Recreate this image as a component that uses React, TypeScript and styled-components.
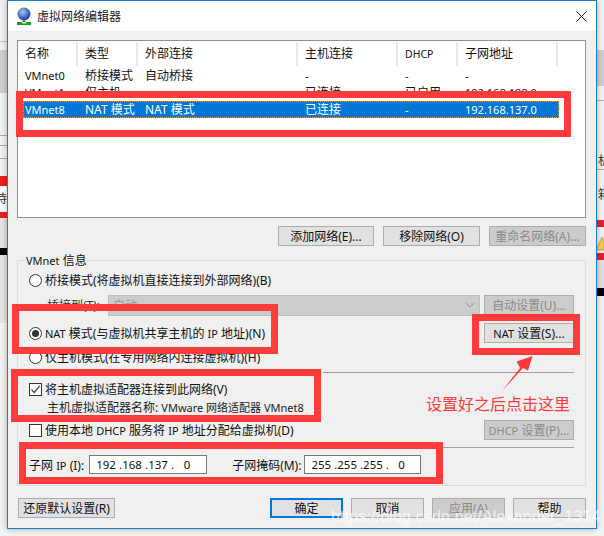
import styled, { createGlobalStyle } from 'styled-components';

const GlobalStyle = createGlobalStyle`
  html, body {
    margin: 0;
    padding: 0;
    background: #f4f4f4;
  }
  body {
    width: 604px;
    height: 536px;
    overflow: hidden;
    font-family: "Noto Sans", "Noto Sans CJK SC", sans-serif;
    font-size: 12px;
    color: #111;
  }
`;

const Desktop = styled.div`
  position: relative;
  width: 604px;
  height: 536px;
  overflow: hidden;
  background: #f3f3f3;
`;

// scraps of the windows behind the dialog
const Scrap = styled.div<{ $side: 'left' | 'right'; $top: number; $height: number; $color: string }>`
  position: absolute;
  ${(p) => (p.$side === 'left' ? 'left: 0; width: 8px;' : 'right: 0; width: 8px;')}
  top: ${(p) => p.$top}px;
  height: ${(p) => p.$height}px;
  background: ${(p) => p.$color};
`;

const ScrapText = styled.span<{ $side: 'left' | 'right'; $top: number }>`
  position: absolute;
  ${(p) => (p.$side === 'left' ? 'left: -5px;' : 'right: -6px;')}
  top: ${(p) => p.$top}px;
  font-size: 12px;
  line-height: 14px;
  color: #333;
`;

const WarnIcon = styled.svg`
  position: absolute;
  right: 0;
  top: 236px;
`;

const Window = styled.div`
  position: absolute;
  left: 7px;
  top: 0;
  width: 590px;
  height: 529px;
  box-sizing: border-box;
  border: 1px solid #1b7cd0;
  background: #f0f0f0;
  box-shadow: 0 0 6px rgba(0, 0, 0, 0.3);
  display: flex;
  flex-direction: column;
`;

const TitleBar = styled.div`
  height: 30px;
  flex: none;
  background: #fff;
  display: flex;
  align-items: center;
  padding: 0 9px 0 8px;
  gap: 5px;
  font-size: 12px;
`;

const Title = styled.span`
  flex: 1;
  color: #222;
`;

const Body = styled.div`
  flex: 1;
  padding: 9px 10px 0 9px;
  display: flex;
  flex-direction: column;
`;

const ListView = styled.div`
  height: 178px;
  flex: none;
  box-sizing: border-box;
  border: 1px solid #8e9096;
  background: #fff;
`;

const HeaderRow = styled.div`
  display: grid;
  grid-template-columns: 60px 60px 160px 100px 60px 100px;
  height: 24px;
  margin: 1px 0;
`;

const HeaderCell = styled.div<{ $latin?: boolean }>`
  padding-left: 7px;
  border-right: 2px solid #e8e8e8;
  line-height: 24px;
  color: #111;
  font-size: ${(p) => (p.$latin ? '10.5px' : '12px')};
`;

const Row = styled.div<{ $selected?: boolean }>`
  display: grid;
  grid-template-columns: 55px 60px 160px 100px 60px 100px;
  width: 536px;
  height: 17px;
  margin-left: 5px;
  line-height: 17px;
  box-sizing: border-box;
  color: ${(p) => (p.$selected ? '#fff' : '#111')};
  background: ${(p) => (p.$selected ? '#0078d7' : 'transparent')};
  outline: ${(p) => (p.$selected ? '1px dotted #f39a2b' : 'none')};
  outline-offset: -1px;
`;

const Cell = styled.div<{ $latin?: boolean }>`
  padding-left: 7px;
  white-space: nowrap;
  font-size: ${(p) => (p.$latin ? '11px' : '12px')};
  &:first-child {
    padding-left: 2px;
  }
`;

const ButtonRow = styled.div`
  display: flex;
  justify-content: flex-end;
  gap: 9px;
  margin-top: 8px;
`;

const Button = styled.div<{ $w: number; $disabled?: boolean; $primary?: boolean; $darker?: boolean }>`
  width: ${(p) => p.$w}px;
  height: 20px;
  flex: none;
  box-sizing: border-box;
  display: flex;
  align-items: center;
  justify-content: center;
  white-space: nowrap;
  background: ${(p) => (p.$darker ? '#cccccc' : '#e1e1e1')};
  border: ${(p) => (p.$primary ? '2px solid #0078d7' : '1px solid #adadad')};
  color: ${(p) => (p.$disabled ? '#8a8a8a' : '#111')};
  font-size: 12px;
`;

const Group = styled.div`
  position: relative;
  margin-top: 14px;
  height: 226px;
  flex: none;
  box-sizing: border-box;
  border: 1px solid #dcdcdc;
  padding: 10px 11px 0;
  display: flex;
  flex-direction: column;
`;

const Legend = styled.span`
  position: absolute;
  left: 7px;
  top: -8px;
  padding: 0 1px;
  background: #f0f0f0;
  line-height: 15px;
`;

const OptionRow = styled.div<{ $top: number; $indent?: number }>`
  display: flex;
  align-items: center;
  justify-content: space-between;
  height: 18px;
  margin-top: ${(p) => p.$top}px;
  padding-left: ${(p) => p.$indent ?? 0}px;
  white-space: nowrap;
`;

const OptionLabel = styled.label`
  display: flex;
  align-items: center;
  gap: 3px;
  color: #111;
`;

const Radio = styled.span<{ $checked?: boolean }>`
  width: 13px;
  height: 13px;
  box-sizing: border-box;
  border-radius: 50%;
  border: 1px solid #333;
  background: #fff;
  display: flex;
  align-items: center;
  justify-content: center;
  &::after {
    content: '';
    width: 7px;
    height: 7px;
    border-radius: 50%;
    background: ${(p) => (p.$checked ? '#333' : 'transparent')};
  }
`;

const Checkbox = styled.span`
  width: 13px;
  height: 13px;
  box-sizing: border-box;
  border: 1px solid #333;
  background: #fff;
  display: flex;
  align-items: center;
  justify-content: center;
`;

const Select = styled.div`
  position: relative;
  width: 372px;
  height: 21px;
  flex: none;
  box-sizing: border-box;
  background: #cccccc;
  border: 1px solid #bfbfbf;
  color: #999;
  padding-left: 4px;
  line-height: 19px;
  margin-left: 8px;
`;

const SelectArrow = styled.svg`
  position: absolute;
  right: 4px;
  top: 6px;
`;

const BridgeLabel = styled.span`
  color: #333;
`;

const Spread = styled.div`
  flex: 1;
`;

const SubnetGap = styled.div`
  flex: none;
  width: 25px;
`;

const SubLabel = styled.div`
  height: 18px;
  line-height: 18px;
  margin: 1px 0 0 18px;
  color: #222;
  white-space: nowrap;
`;

const Small = styled.span`
  font-size: 11px;
`;

const Divider = styled.div<{ $top: number; $left: number }>`
  position: absolute;
  top: ${(p) => p.$top}px;
  left: ${(p) => p.$left}px;
  right: 11px;
  height: 1px;
  background: #a0a0a0;
`;

const SubnetRow = styled.div`
  display: flex;
  align-items: center;
  margin-top: 16px;
  height: 19px;
  white-space: nowrap;
`;

const IpInput = styled.div<{ $w: number; $ml: number }>`
  width: ${(p) => p.$w}px;
  margin-left: ${(p) => p.$ml}px;
  height: 19px;
  box-sizing: border-box;
  border: 1px solid #7a7a7a;
  background: #fff;
  display: grid;
  grid-template-columns: repeat(4, 1fr);
  padding: 0 6px;
  line-height: 17px;
  font-size: 11.5px;
`;

const Octet = styled.span`
  text-align: center;
`;

const Footer = styled.div`
  display: flex;
  margin-top: 12px;
  gap: 8px;
  padding-left: 1px;
`;

const RedBox = styled.div<{ $x: number; $y: number; $w: number; $h: number }>`
  position: absolute;
  left: ${(p) => p.$x}px;
  top: ${(p) => p.$y}px;
  width: ${(p) => p.$w}px;
  height: ${(p) => p.$h}px;
  box-sizing: border-box;
  border: 7px solid #ff3b3b;
`;

const Note = styled.div`
  position: absolute;
  left: 426px;
  top: 394px;
  font-size: 16px;
  line-height: 20px;
  color: #ff3b3b;
  white-space: nowrap;
`;

const ArrowSvg = styled.svg`
  position: absolute;
  left: 495px;
  top: 350px;
`;

const Watermark = styled.div`
  position: absolute;
  left: 331px;
  top: 507px;
  font-family: "Liberation Sans", sans-serif;
  font-size: 16px;
  letter-spacing: 0.15px;
  line-height: 20px;
  color: rgba(255, 255, 255, 0.72);
  white-space: nowrap;
`;

const Check = () => (
  <svg width="11" height="11" viewBox="0 0 11 11">
    <path d="M1.5 5.5 L4.2 8.5 L9.8 1.8" fill="none" stroke="#444" strokeWidth="1.2" />
  </svg>
);

const NetIcon = () => (
  <svg width="16" height="18" viewBox="0 0 16 18">
    <defs>
      <radialGradient id="globe" cx="0.4" cy="0.35" r="0.7">
        <stop offset="0" stopColor="#a9c8f2" />
        <stop offset="0.6" stopColor="#3f6fc4" />
        <stop offset="1" stopColor="#1d3c8c" />
      </radialGradient>
    </defs>
    <circle cx="8" cy="7" r="6.5" fill="url(#globe)" />
    <rect x="6.5" y="13" width="3" height="2" fill="#777" />
    <rect x="1" y="15" width="14" height="3" fill="#19a319" />
    <rect x="6" y="15" width="4" height="1.5" fill="#e8e8e8" />
  </svg>
);

const CloseIcon = () => (
  <svg width="11" height="11" viewBox="0 0 11 11">
    <path d="M0.5 0.5 L10.5 10.5 M10.5 0.5 L0.5 10.5" stroke="#222" strokeWidth="1" />
  </svg>
);

const isLatin = (s: string) => /^[\x00-\x7f]+$/.test(s);

const columns = ['名称', '类型', '外部连接', '主机连接', 'DHCP', '子网地址'];
const rows = [
  ['VMnet0', '桥接模式', '自动桥接', '-', '-', '-'],
  ['VMnet1', '仅主机', '-', '已连接', '已启用', '192.168.188.0'],
  ['VMnet8', 'NAT 模式', 'NAT 模式', '已连接', '-', '192.168.137.0'],
];

export default function App() {
  return (
    <Desktop>
      <GlobalStyle />
      <Scrap $side="left" $top={41} $height={1} $color="#c4c4c4" />
      <Scrap $side="left" $top={50} $height={43} $color="#cfcfcf" />
      <Scrap $side="left" $top={135} $height={1} $color="#aaa" />
      <Scrap $side="left" $top={145} $height={1} $color="#aaa" />
      <Scrap $side="left" $top={158} $height={1} $color="#aaa" />
      <Scrap $side="left" $top={176} $height={10} $color="#ee1c25" />
      <Scrap $side="left" $top={186} $height={26} $color="#fff" />
      <ScrapText $side="left" $top={192}>持</ScrapText>
      <Scrap $side="left" $top={212} $height={6} $color="#ee1c25" />
      <Scrap $side="left" $top={218} $height={30} $color="#e4e4e4" />
      <Scrap $side="left" $top={248} $height={7} $color="#000" />
      <Scrap $side="left" $top={255} $height={68} $color="#e4e4e4" />
      <Scrap $side="right" $top={50} $height={36} $color="#cfcfcf" />
      <Scrap $side="right" $top={100} $height={1} $color="#aaa" />
      <ScrapText $side="right" $top={154}>机</ScrapText>
      <Scrap $side="right" $top={169} $height={1} $color="#aaa" />
      <ScrapText $side="right" $top={188}>箱</ScrapText>
      <Scrap $side="right" $top={220} $height={7} $color="#ee1c25" />
      <WarnIcon width="8" height="15" viewBox="0 0 8 15">
        <path d="M0 14 L6 1 L8 5 L8 14 Z" fill="#f4d03f" stroke="#8a7a20" strokeWidth="0.5" />
      </WarnIcon>
      <Scrap $side="right" $top={253} $height={7} $color="#ee1c25" />
      <Scrap $side="right" $top={260} $height={28} $color="#e0e0e0" />
      <Scrap $side="right" $top={288} $height={8} $color="#000" />
      <Window>
        <TitleBar>
          <NetIcon />
          <Title>虚拟网络编辑器</Title>
          <CloseIcon />
        </TitleBar>
        <Body>
          <ListView>
            <HeaderRow>
              {columns.map((c) => (
                <HeaderCell key={c} $latin={isLatin(c)}>{c}</HeaderCell>
              ))}
            </HeaderRow>
            {rows.map((r) => (
              <Row key={r[0]} $selected={r[0] === 'VMnet8'}>
                {r.map((c, i) => (
                  <Cell key={i} $latin={isLatin(c)}>{c}</Cell>
                ))}
              </Row>
            ))}
          </ListView>
          <ButtonRow>
            <Button $w={96}>添加网络(E)...</Button>
            <Button $w={97}>移除网络(O)</Button>
            <Button $w={97} $disabled $darker>重命名网络(A)...</Button>
          </ButtonRow>
          <Group>
            <Legend><Small>VMnet</Small> 信息</Legend>
            <OptionRow $top={0}>
              <OptionLabel><Radio />桥接模式(将虚拟机直接连接到外部网络)(B)</OptionLabel>
            </OptionRow>
            <OptionRow $top={7} $indent={18}>
              <BridgeLabel>桥接到(T):</BridgeLabel>
              <Select>
                自动
                <SelectArrow width="10" height="6" viewBox="0 0 10 6">
                  <path d="M1 1 L5 5 L9 1" fill="none" stroke="#999" strokeWidth="1" />
                </SelectArrow>
              </Select>
              <Spread />
              <Button $w={90} $disabled $darker>自动设置(U)...</Button>
            </OptionRow>
            <OptionRow $top={10}>
              <OptionLabel>
                <Radio $checked />
                <span><Small>NAT</Small> 模式(与虚拟机共享主机的 <Small>IP</Small> 地址)(N)</span>
              </OptionLabel>
              <Button $w={90}><span><Small>NAT</Small> 设置(S)...</span></Button>
            </OptionRow>
            <OptionRow $top={6}>
              <OptionLabel><Radio />仅主机模式(在专用网络内连接虚拟机)(H)</OptionLabel>
            </OptionRow>
            <OptionRow $top={14}>
              <OptionLabel><Checkbox><Check /></Checkbox>将主机虚拟适配器连接到此网络(V)</OptionLabel>
            </OptionRow>
            <SubLabel>主机虚拟适配器名称: <Small>VMware 网络适配器 VMnet8</Small></SubLabel>
            <Divider $top={111} $left={305} />
            <OptionRow $top={4}>
              <OptionLabel>
                <Checkbox />
                <span>使用本地 <Small>DHCP</Small> 服务将 <Small>IP</Small> 地址分配给虚拟机(D)</span>
              </OptionLabel>
              <Button $w={90} $disabled $darker><span><Small>DHCP</Small> 设置(P)...</span></Button>
            </OptionRow>
            <Divider $top={186} $left={425} />
            <SubnetRow>
              <span>子网 <Small>IP</Small> (I):</span>
              <IpInput $w={118} $ml={5}>
                <Octet>192 .</Octet><Octet>168 .</Octet><Octet>137 .</Octet><Octet>0</Octet>
              </IpInput>
              <SubnetGap />
              子网掩码(M):
              <IpInput $w={117} $ml={3}>
                <Octet>255 .</Octet><Octet>255 .</Octet><Octet>255 .</Octet><Octet>0</Octet>
              </IpInput>
            </SubnetRow>
          </Group>
          <Footer>
            <Button $w={97}>还原默认设置(R)</Button>
            <Spread />
            <Button $w={73} $primary>确定</Button>
            <Button $w={73}>取消</Button>
            <Button $w={73} $disabled $darker>应用(A)</Button>
            <Button $w={73}>帮助</Button>
          </Footer>
        </Body>
      </Window>
      <RedBox $x={16} $y={91} $w={555} $h={46} />
      <RedBox $x={12} $y={304} $w={266} $h={50} />
      <RedBox $x={472} $y={314} $w={108} $h={41} />
      <RedBox $x={11} $y={369} $w={310} $h={53} />
      <RedBox $x={19} $y={442} $w={424} $h={42} />
      <ArrowSvg width="40" height="46" viewBox="0 0 40 46">
        <path d="M7 41 L25 18 L21.6 11.6 L37.6 6 L33 20.6 L28 18 Z" fill="#ff3b3b" />
      </ArrowSvg>
      <Note>设置好之后点击这里</Note>
      <Watermark>https://blog.csdn.net/Alexander_1314</Watermark>
    </Desktop>
  );
}
